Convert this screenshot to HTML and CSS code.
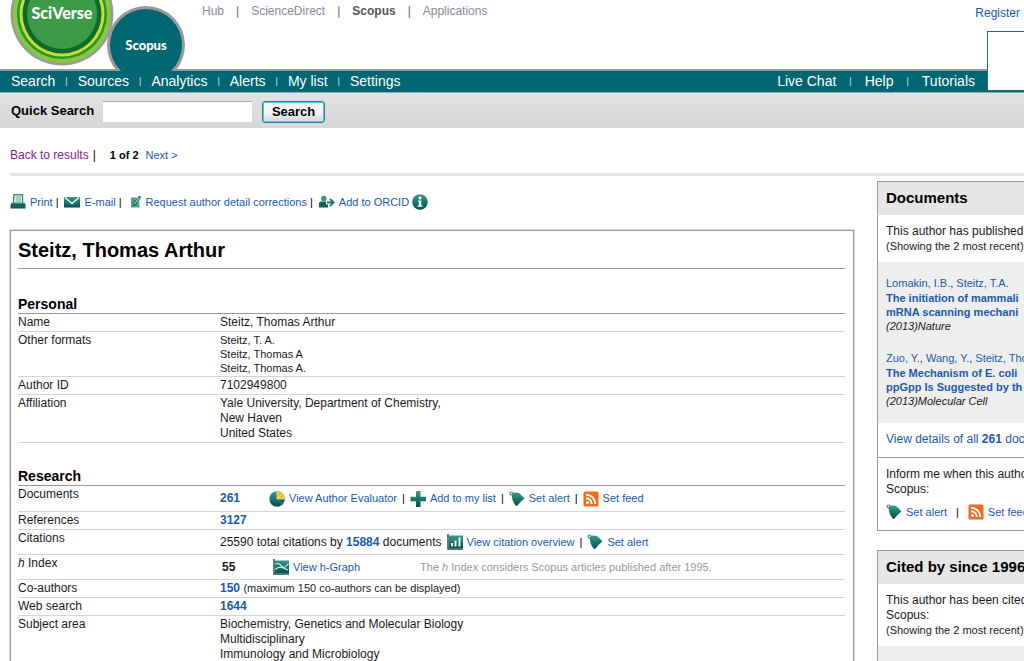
FILE: index.html
```html
<!DOCTYPE html>
<html lang="en">
<head>
<meta charset="utf-8">
<title>Scopus - Author details</title>
<link rel="stylesheet" href="styles.css">
</head>
<body>
<svg class="defs" width="0" height="0" aria-hidden="true">
  <defs>
    <linearGradient id="teal" x1="0" y1="0" x2="0" y2="1"><stop offset="0" stop-color="#3a9c8c"/><stop offset="1" stop-color="#00504f"/></linearGradient>
    <symbol id="i-print" viewBox="0 0 16 16"><path d="M4 .8h8.500v8.700H3.500z" fill="#fff" stroke="#3a8f6c" stroke-width="1.400"/><path d="M5.500 3h5.500M5.500 5h5.500M5.500 7h5.500" stroke="#5aa377"/><path d="M1.500 8.500h13l1 2.500v3.500H.5V11z" fill="url(#teal)"/><path d="M1 11h14.500" stroke="#003f40"/></symbol>
    <symbol id="i-mail" viewBox="0 0 16 16"><path d="M0 3h16v10.500H0z" fill="url(#teal)"/><path d="M1 3.500l7 6 7-6" fill="none" stroke="#e8f4f1" stroke-width="1.500"/></symbol>
    <symbol id="i-edit" viewBox="0 0 12 16"><path d="M1 3.500h6L4 9v2l3-1 2.500-3v6.500H1z" fill="#4d9f90"/><path d="M3 12.500l.8-4.500L9 1.500l2.500 1.500-5 7.500z" fill="url(#teal)"/><path d="M4.500 10L9 4" stroke="#cfe4dc"/></symbol>
    <symbol id="i-orcid" viewBox="0 0 16 16"><circle cx="4.800" cy="4.500" r="2.700" fill="#3a9281"/><path d="M0 13.500V9.500q0-2 2-2h5q2 0 2 2v4z" fill="#0d625d"/><path d="M7 8.500h7M11 5l3.500 3.500L11 12" fill="none" stroke="#fff" stroke-width="4"/><path d="M8 8.500h6M11 5l3.500 3.500L11 12" fill="none" stroke="#1d7a6c" stroke-width="2"/></symbol>
    <symbol id="i-info" viewBox="0 0 16 16"><circle cx="8" cy="8" r="7.800" fill="url(#teal)"/><circle cx="8" cy="4" r="1.500" fill="#fff"/><path d="M6 6.500h3.200v5H10.500v1.300H5.500v-1.300H6.800V7.800H6z" fill="#fff"/></symbol>
    <symbol id="i-pie" viewBox="0 0 16 16"><circle cx="8" cy="8" r="7.700" fill="url(#teal)"/><path d="M8 8V.3a7.700 7.700 0 0 1 5.400 13.100z" fill="#f3bd35"/><path d="M8 8h7.700a7.700 7.700 0 0 1-2.300 5.400z" fill="#0d6a60"/><path d="M8 8V.3M8 8h7.500M8 8l5-5" stroke="#fbe6a8" stroke-width=".8"/></symbol>
    <symbol id="i-plus" viewBox="0 0 16 16"><path d="M6 0h4.500v5.700H16v4.500h-5.500V16H6v-5.800H.5V5.700H6z" fill="url(#teal)"/></symbol>
    <symbol id="i-alert" viewBox="0 0 16 16"><circle cx="2.500" cy="2.500" r="1.500" fill="none" stroke="#3a9281" stroke-width="1.200"/><path d="M2.500 3Q6 .8 10 2q2.500 2 5.500 5.500-2 1.500-4 3.500L8 15q-1.500 0-2-1.500Q3 10 2.500 3z" fill="url(#teal)"/></symbol>
    <symbol id="i-rss" viewBox="0 0 16 16"><rect x=".5" y=".5" width="15" height="15" rx="1.500" fill="#ee6c1c"/><circle cx="4.500" cy="11.500" r="1.600" fill="#fff"/><path d="M3 7.200a5.800 5.800 0 0 1 5.800 5.800M3 3.700A9.300 9.300 0 0 1 12.300 13" fill="none" stroke="#fff" stroke-width="1.900"/></symbol>
    <symbol id="i-bars" viewBox="0 0 16 16"><path d="M2 1.500h14V14H2z" fill="url(#teal)"/><path d="M1 0v15h15" fill="none" stroke="#0b4f4a" stroke-width="1.400"/><path d="M5 12.500V9M8.500 12.500V6.500M12.500 12.500V3.500" stroke="#fff" stroke-width="2"/></symbol>
    <symbol id="i-graph" viewBox="0 0 16 16"><path d="M2 1.500h14V14H2z" fill="url(#teal)"/><path d="M1 0v15h15" fill="none" stroke="#0b4f4a" stroke-width="1.400"/><path d="M2.500 5q3-1.500 5.500 1.500t7 4.500M2.500 10.500q3-3 6-2t7-4" fill="none" stroke="#d5ece5" stroke-width="1.200"/></symbol>
  </defs>
</svg>

<header class="masthead">
  <svg class="logo" width="190" height="71" viewBox="0 0 190 71" role="img" aria-label="SciVerse Scopus">
    <circle cx="62" cy="14" r="51.500" fill="#999"/>
    <circle cx="62" cy="14" r="49" fill="#8cc63f"/>
    <circle cx="62" cy="14" r="45" fill="#1f9a35"/>
    <circle cx="62" cy="14" r="42.500" fill="#cfd934"/>
    <circle cx="62" cy="14" r="39.500" fill="#0b6b2c"/>
    <circle cx="62" cy="14" r="35" fill="#3d9b47"/>
    <circle cx="146" cy="45" r="39" fill="#999"/>
    <circle cx="146" cy="45" r="36" fill="#006672"/>
    <text class="logo-main" x="62" y="19" text-anchor="middle">SciVerse</text>
    <text class="logo-sub" x="146" y="50" text-anchor="middle">Scopus</text>
  </svg>
  <nav class="services">
    <a href="#">Hub</a><span>|</span><a href="#">ScienceDirect</a><span>|</span><a class="current" href="#">Scopus</a><span>|</span><a href="#">Applications</a>
  </nav>
  <a class="register" href="#">Register</a>
  <div class="login-tab"></div>
</header>

<nav class="menu">
  <div class="menu-left">
    <a href="#">Search</a><span>|</span><a href="#">Sources</a><span>|</span><a href="#">Analytics</a><span>|</span><a href="#">Alerts</a><span>|</span><a href="#">My list</a><span>|</span><a href="#">Settings</a>
  </div>
  <div class="menu-right">
    <a href="#">Live Chat</a><span>|</span><a href="#">Help</a><span>|</span><a href="#">Tutorials</a>
  </div>
</nav>

<form class="quick">
  <label for="q">Quick Search</label>
  <input id="q" type="text">
  <button type="button">Search</button>
</form>

<div class="pager">
  <a class="visited" href="#">Back to results</a><span class="bar">|</span><b>1 of 2</b><a class="next" href="#">Next &gt;</a>
</div>

<div class="columns">
  <main>
    <div class="tools">
      <a href="#"><svg class="icon"><use href="#i-print"/></svg>Print</a><span class="bar">|</span>
      <a href="#"><svg class="icon"><use href="#i-mail"/></svg>E-mail</a><span class="bar">|</span>
      <a class="edit" href="#"><svg class="icon icon-narrow"><use href="#i-edit"/></svg>Request author detail corrections</a><span class="bar">|</span>
      <a href="#"><svg class="icon"><use href="#i-orcid"/></svg>Add to ORCID</a>
      <a class="info" href="#" aria-label="Information"><svg class="icon"><use href="#i-info"/></svg></a>
    </div>

    <article class="author">
      <h1>Steitz, Thomas Arthur</h1>

      <h2>Personal</h2>
      <table>
        <tr><th>Name</th><td>Steitz, Thomas Arthur</td></tr>
        <tr><th>Other formats</th><td class="small">Steitz, T. A.<br>Steitz, Thomas A<br>Steitz, Thomas A.</td></tr>
        <tr><th>Author ID</th><td>7102949800</td></tr>
        <tr><th>Affiliation</th><td>Yale University, Department of Chemistry,<br>New Haven<br>United States</td></tr>
      </table>

      <h2>Research</h2>
      <table>
        <tr><th>Documents</th><td>
          <div class="line tall">
            <a class="count" href="#">261</a>
            <a href="#"><svg class="icon"><use href="#i-pie"/></svg>View Author Evaluator</a><span class="bar">|</span>
            <a href="#"><svg class="icon"><use href="#i-plus"/></svg>Add to my list</a><span class="bar">|</span>
            <a href="#"><svg class="icon"><use href="#i-alert"/></svg>Set alert</a><span class="bar">|</span>
            <a href="#"><svg class="icon"><use href="#i-rss"/></svg>Set feed</a>
          </div></td></tr>
        <tr><th>References</th><td><a class="num" href="#">3127</a></td></tr>
        <tr><th>Citations</th><td>
          <div class="line">
            <span class="cites">25590 total citations by <a class="num" href="#">15884</a> documents</span>
            <a href="#"><svg class="icon"><use href="#i-bars"/></svg>View citation overview</a><span class="bar">|</span>
            <a href="#"><svg class="icon"><use href="#i-alert"/></svg>Set alert</a>
          </div></td></tr>
        <tr><th><i>h</i> Index</th><td>
          <div class="line">
            <b class="hvalue">55</b>
            <a href="#"><svg class="icon"><use href="#i-graph"/></svg>View h-Graph</a>
            <span class="hnote">The <i>h</i> Index considers Scopus articles published after 1995.</span>
          </div></td></tr>
        <tr><th>Co-authors</th><td><a class="num" href="#">150</a> <span class="small">(maximum 150 co-authors can be displayed)</span></td></tr>
        <tr><th>Web search</th><td><a class="num" href="#">1644</a></td></tr>
        <tr><th>Subject area</th><td>Biochemistry, Genetics and Molecular Biology<br>Multidisciplinary<br>Immunology and Microbiology</td></tr>
      </table>
    </article>
  </main>

  <aside>
    <section class="panel">
      <h3>Documents</h3>
      <p>This author has published<br><small>(Showing the 2 most recent)</small></p>
      <div class="papers">
        <div class="paper"><a href="#">Lomakin, I.B.</a>, <a href="#">Steitz, T.A.</a><a class="title" href="#">The initiation of mammali<br>mRNA scanning mechani</a><i>(2013)Nature</i></div>
        <div class="paper"><a href="#">Zuo, Y.</a>, <a href="#">Wang, Y.</a>, <a href="#">Steitz, Tho</a><a class="title" href="#">The Mechanism of E. coli<br>ppGpp Is Suggested by th</a><i>(2013)Molecular Cell</i></div>
      </div>
      <a class="all" href="#">View details of all <b>261</b> doc</a>
      <div class="inform">
        Inform me when this autho<br>Scopus:
        <div class="line">
          <a href="#"><svg class="icon"><use href="#i-alert"/></svg>Set alert</a><span class="bar">|</span>
          <a href="#"><svg class="icon"><use href="#i-rss"/></svg>Set feed</a>
        </div>
      </div>
    </section>
    <section class="panel">
      <h3>Cited by since 1996</h3>
      <p>This author has been cited<br>Scopus:<br><small>(Showing the 2 most recent)</small></p>
      <div class="papers"></div>
    </section>
  </aside>
</div>
</body>
</html>
```

FILE: styles.css
```css
* { box-sizing: border-box; }
html { height: 100%; overflow: hidden; }
body {
  margin: 0;
  height: 100%;
  overflow: hidden;
  background: #fff;
  color: #1a1a1a;
  font: 12px/15px Arial, "Liberation Sans", sans-serif;
}
a { color: #1a5aad; text-decoration: none; }
.defs { position: absolute; }
.icon { width: 16px; height: 16px; flex: none; }
.icon-narrow { width: 12px; }
.bar { color: #000; }

/* Masthead */
.masthead {
  position: relative;
  display: flex;
  align-items: flex-start;
  height: 71px;
  box-shadow: inset 0 -2px #999;
}
.logo { display: block; flex: none; }
.logo text { fill: #fff; font-weight: 900; }
.logo-main { font-family: Lato, sans-serif; font-size: 16px; }
.logo-sub { font-family: Lato, sans-serif; font-size: 13px; }
.services { display: flex; gap: 12px; padding: 4px 0 0 12px; color: #666; }
.services a { color: #888b9c; }
.services .current { color: #555; font-weight: 700; }
.register { margin: 6px 4px 0 auto; }
.login-tab {
  position: absolute;
  top: 31px;
  right: 0;
  z-index: 1;
  width: 37px;
  height: 60px;
  background: #fff;
  border: solid #1d6f7c;
  border-width: 1px 0 1px 1px;
}

/* Menu */
.menu {
  display: flex;
  justify-content: space-between;
  height: 22px;
  padding: 0 49px 0 11px;
  background: #006672;
  border-bottom: 1px solid #7fb0b4;
  color: #d8e8ea;
  font-size: 14px;
  line-height: 21px;
}
.menu a { color: #fff; }
.menu span { font-size: 9px; }
.menu-left { display: flex; gap: 10px; }
.menu-right { display: flex; gap: 13px; }

/* Quick search */
.quick {
  display: flex;
  align-items: center;
  height: 35px;
  padding: 2px 11px 0;
  background: linear-gradient(#e2e2e2, #d7d7d7);
  color: #000;
  font-size: 13px;
  font-weight: 700;
}
.quick label { margin-right: 9px; padding-bottom: 2px; }
.quick input {
  width: 149px;
  height: 21px;
  padding: 0 4px;
  border: 0;
  border-top: 1px solid #aaa;
  background: #fff;
}
.quick button {
  width: 63px;
  height: 22px;
  margin-left: 10px;
  padding: 0;
  border: 1px solid #2b7f9d;
  border-radius: 3px;
  box-shadow: inset 0 0 0 1px #55c4e0;
  background: linear-gradient(#f4f4f4 50%, #d4d4d4);
  font: 700 13px/15px Arial, "Liberation Sans", sans-serif;
}

/* Pager */
.pager {
  display: flex;
  align-items: center;
  height: 48px;
  margin-left: 10px;
  padding-top: 10px;
  border-bottom: 3px solid #e6e6e6;
  font-size: 11px;
}
.pager .visited { color: #8a2290; font-size: 12px; }
.pager .bar { margin: 0 14px 0 4px; font-size: 12px; }
.pager b { color: #000; }
.pager .next { margin-left: 7px; }

/* Columns */
.columns {
  display: grid;
  grid-template-columns: minmax(0, 1fr) 147px;
  column-gap: 23px;
  padding-left: 10px;
}
.tools { display: flex; align-items: center; height: 54px; padding-bottom: 2px; font-size: 11px; gap: 3px; }
.tools a, .line a { display: inline-flex; align-items: center; gap: 4px; white-space: nowrap; }
.tools .bar { margin-right: 3px; }
.tools .edit { margin-left: 2px; }

/* Author card */
.author {
  padding: 8px 8px 16px 7px;
  border: 1px solid #999;
  box-shadow: 0 0 0 1px #ddd;
}
.author h1 {
  margin: 0 0 28px;
  padding-bottom: 7px;
  border-bottom: 1px solid #999;
  color: #000;
  font-size: 20px;
  line-height: 22px;
}
.author h2 { margin: 0; padding-bottom: 1px; color: #000; font-size: 14px; line-height: 15px; }
.author table {
  width: 100%;
  margin-bottom: 26px;
  border-collapse: collapse;
  border-top: 1px solid #999;
}
.author th {
  width: 202px;
  padding: 1px 0;
  font-weight: 400;
  text-align: left;
  vertical-align: top;
}
.author td { padding: 1px 0; vertical-align: top; }
.author tr { border-bottom: 1px solid #d5d5d5; }
.small, td.small { font-size: 11px; line-height: 14px; }
.num, .count { font-weight: 700; }
.line { display: flex; align-items: center; gap: 5px; font-size: 11px; line-height: 15px; }
.author .line { min-height: 22px; }
.author .tall { min-height: 23px; }
.line .count { width: 44px; font-size: 12px; }
.cites { font-size: 12px; }
.cites .num { display: inline; }
.hvalue { width: 48px; padding-left: 2px; font-size: 12px; }
.hnote { margin-left: 55px; color: #999; }

/* Side panels */
.panel {
  margin: 5px 0 19px;
  border: solid #999;
  border-width: 1px 0 1px 1px;
  overflow: hidden;
  white-space: nowrap;
}
.panel h3 {
  margin: 0;
  padding: 7px 8px 8px;
  background: #e6e6e6;
  color: #000;
  font-size: 15px;
  line-height: 18px;
}
.panel p { margin: 0; padding: 9px 8px 8px; }
.panel small { display: inline-block; font-size: 11px; line-height: 14px; }
.papers {
  display: grid;
  gap: 17px;
  min-height: 60px;
  padding: 14px 8px;
  background: #eee;
  font-size: 11px;
}
.paper { line-height: 15px; }
.paper .title { display: block; font-weight: 700; line-height: 14px; }
.all { display: block; padding: 9px 8px 10px; }
.inform { padding: 9px 8px 10px; border-top: 1px solid #999; }
.inform .line { gap: 9px; padding-top: 7px; }
```
